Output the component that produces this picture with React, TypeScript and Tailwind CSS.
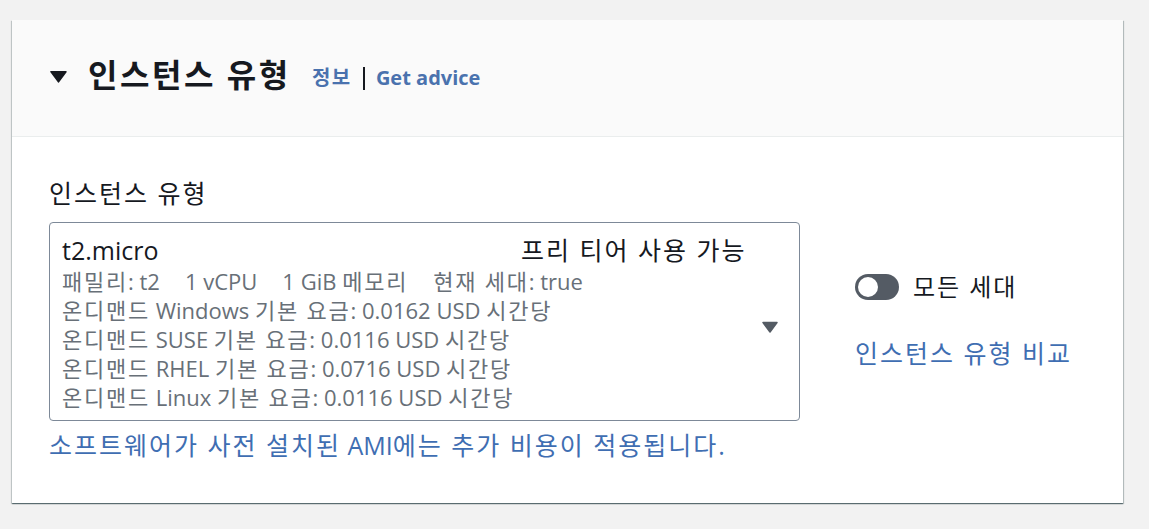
import { Fragment } from 'react'

const FONT = '"Open Sans", "Noto Sans CJK KR", sans-serif'

const details = [
  '온디맨드 Windows 기본 요금: 0.0162 USD 시간당',
  '온디맨드 SUSE 기본 요금: 0.0116 USD 시간당',
  '온디맨드 RHEL 기본 요금: 0.0716 USD 시간당',
  '온디맨드 Linux 기본 요금: 0.0116 USD 시간당',
]

// hangul in the reference sits wider than Noto's, so pad those runs a bit
function K({ children }: { children: string }) {
  const parts = children.split(/([\uAC00-\uD7A3]+(?:\s+[\uAC00-\uD7A3]+)*)/)
  return (
    <>
      {parts.map((p, i) =>
        /[\uAC00-\uD7A3]/.test(p) ? (
          <span key={i} className="tracking-[0.08em]">{p}</span>
        ) : (
          <Fragment key={i}>{p}</Fragment>
        ),
      )}
    </>
  )
}

function Caret({ className }: { className?: string }) {
  return (
    <svg viewBox="0 0 16 12" className={className} fill="currentColor">
      <path d="M1 1.5 L15 1.5 L8 11 Z" strokeLinejoin="round" stroke="currentColor" strokeWidth="1.5" />
    </svg>
  )
}

function InstanceSelect() {
  return (
    <div className="w-[751px] h-[199px] border border-[#7d8998] rounded-[4px] bg-white pl-[12px] pr-[21px] pt-[10px] flex items-center">
      <div className="flex-1 self-start">
        <div className="flex text-[25px] text-[#16191f] leading-[34px]">
          <span className="w-[459px]">t2.micro</span>
          <span className="tracking-[-0.3px]"><K>프리 티어 사용 가능</K></span>
        </div>
        <div className="text-[22px] text-[#687078] leading-[29px]">
          <div className="flex gap-[25px]">
            <span><K>패밀리: t2</K></span>
            <span>1 vCPU</span>
            <span><K>1 GiB 메모리</K></span>
            <span><K>현재 세대: true</K></span>
          </div>
          {details.map((d) => (
            <div key={d}><K>{d}</K></div>
          ))}
        </div>
      </div>
      <Caret className="w-[16px] h-[12px] text-[#545b64]" />
    </div>
  )
}

export default function App() {
  return (
    <div className="min-h-[529px] bg-[#f2f2f2] pt-[20px] pl-[12px]" style={{ fontFamily: FONT }}>
      <div className="w-[1111px] h-[483px] bg-white shadow-[0_1px_1px_0_rgba(0,28,36,0.45),1px_1px_1px_0_rgba(0,28,36,0.2),-1px_1px_1px_0_rgba(0,28,36,0.15)]">
        <div className="h-[117px] bg-[#fafafa] border-b border-[#eaeded] flex items-center pl-[38px] pb-[6px]">
          <Caret className="w-[17px] h-[13px] text-[#16191f] mr-[21px] mt-[2px]" />
          <h2 className="text-[32px] font-bold text-[#16191f] mr-[21px]"><K>인스턴스 유형</K></h2>
          <div className="flex items-center text-[20px] font-bold text-[#4a72ae] pt-[6px]">
            <span><K>정보</K></span>
            <span className="w-[2px] h-[23px] bg-[#16191f] ml-[11px] mr-[11px]" />
            <span>Get advice</span>
          </div>
        </div>
        <div className="pl-[37px] pt-[41px] flex">
          <div>
            <div className="text-[25px] text-[#16191f] leading-[30px] mb-[14px]"><K>인스턴스 유형</K></div>
            <InstanceSelect />
            <div className="text-[25px] text-[#3f6eb2] mt-[7px] leading-[34px]">
              <K>소프트웨어가 사전 설치된 AMI에는 추가 비용이 적용됩니다.</K>
            </div>
          </div>
          <div className="ml-[55px] pt-[94px]">
            <div className="flex items-center gap-[14px]">
              <div className="w-[44px] h-[26px] rounded-full bg-[#545b64] flex items-center pl-[3px]">
                <div className="w-[20px] h-[20px] rounded-full bg-white" />
              </div>
              <span className="text-[24px] text-[#16191f] leading-[30px]"><K>모든 세대</K></span>
            </div>
            <div className="text-[25px] text-[#3f6eb2] mt-[36px] leading-[30px]"><K>인스턴스 유형 비교</K></div>
          </div>
        </div>
      </div>
    </div>
  )
}
